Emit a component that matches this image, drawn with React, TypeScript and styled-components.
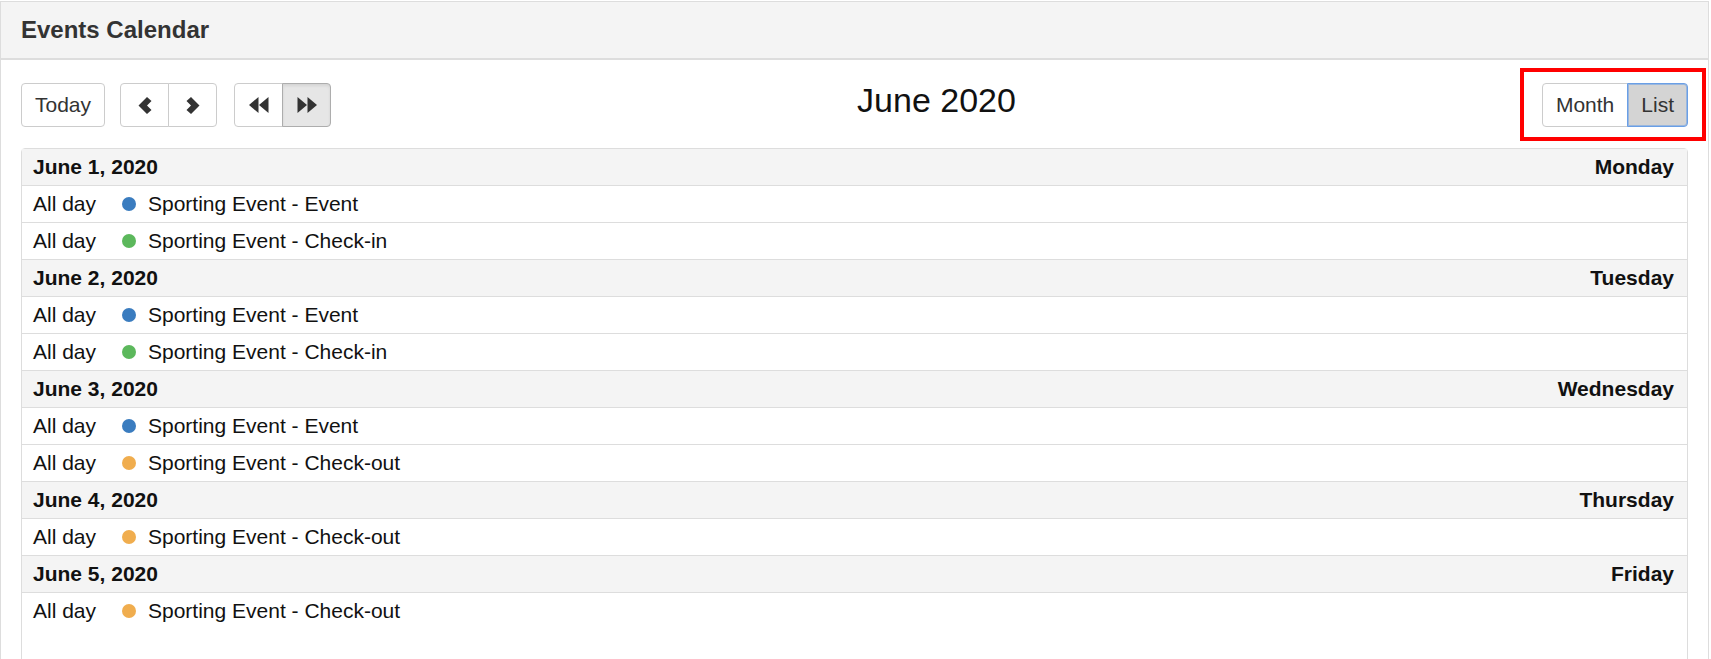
import styled, { createGlobalStyle } from 'styled-components'

type CalEvent = { title: string; kind: 'event' | 'checkin' | 'checkout' }
type Day = { date: string; weekday: string; events: CalEvent[] }

const days: Day[] = [
  {
    date: 'June 1, 2020',
    weekday: 'Monday',
    events: [
      { title: 'Sporting Event - Event', kind: 'event' },
      { title: 'Sporting Event - Check-in', kind: 'checkin' },
    ],
  },
  {
    date: 'June 2, 2020',
    weekday: 'Tuesday',
    events: [
      { title: 'Sporting Event - Event', kind: 'event' },
      { title: 'Sporting Event - Check-in', kind: 'checkin' },
    ],
  },
  {
    date: 'June 3, 2020',
    weekday: 'Wednesday',
    events: [
      { title: 'Sporting Event - Event', kind: 'event' },
      { title: 'Sporting Event - Check-out', kind: 'checkout' },
    ],
  },
  {
    date: 'June 4, 2020',
    weekday: 'Thursday',
    events: [{ title: 'Sporting Event - Check-out', kind: 'checkout' }],
  },
  {
    date: 'June 5, 2020',
    weekday: 'Friday',
    events: [{ title: 'Sporting Event - Check-out', kind: 'checkout' }],
  },
]

const dotColors = {
  event: '#3a7cbf',
  checkin: '#5cb85c',
  checkout: '#f0ad4e',
}

const ChevronLeft = () => (
  <svg width="14" height="17" viewBox="0 0 14 17">
    <path d="M9 0 L13.5 4 L9 8.5 L13.5 13 L9 17 L0.5 8.5 Z" fill="#333" />
  </svg>
)

const ChevronRight = () => (
  <svg width="14" height="17" viewBox="0 0 14 17">
    <path d="M5 0 L0.5 4 L5 8.5 L0.5 13 L5 17 L13.5 8.5 Z" fill="#333" />
  </svg>
)

const FastBackward = () => (
  <svg width="20" height="16" viewBox="0 0 20 16">
    <polygon points="9.5,0 0,8 9.5,16" fill="#333" />
    <polygon points="19.5,0 10,8 19.5,16" fill="#333" />
  </svg>
)

const FastForward = () => (
  <svg width="20" height="16" viewBox="0 0 20 16">
    <polygon points="0.5,0 10,8 0.5,16" fill="#333" />
    <polygon points="10.5,0 20,8 10.5,16" fill="#333" />
  </svg>
)

export default function App() {
  return (
    <>
      <GlobalStyle />
      <Panel>
        <PanelHeading>Events Calendar</PanelHeading>
        <PanelBody>
          <Toolbar>
            <LeftChunk>
              <Button>Today</Button>
              <ButtonGroup>
                <Button $icon>
                  <ChevronLeft />
                </Button>
                <Button $icon>
                  <ChevronRight />
                </Button>
              </ButtonGroup>
              <ButtonGroup $wide>
                <Button $icon>
                  <FastBackward />
                </Button>
                <Button $icon $pressed>
                  <FastForward />
                </Button>
              </ButtonGroup>
            </LeftChunk>
            <Title>June 2020</Title>
            <ViewSwitch>
              <Button>Month</Button>
              <Button $focused>List</Button>
              <Highlight />
            </ViewSwitch>
          </Toolbar>
          <ListView>
            {days.map((day) => (
              <DayBlock key={day.date}>
                <DayHeading>
                  <span>{day.date}</span>
                  <span>{day.weekday}</span>
                </DayHeading>
                {day.events.map((ev, i) => (
                  <EventRow key={i}>
                    <TimeCell>All day</TimeCell>
                    <Dot $color={dotColors[ev.kind]} />
                    <span>{ev.title}</span>
                  </EventRow>
                ))}
              </DayBlock>
            ))}
          </ListView>
        </PanelBody>
      </Panel>
    </>
  )
}

const GlobalStyle = createGlobalStyle`
  body {
    margin: 0;
    background: #fff;
    font-family: "Liberation Sans", Arial, sans-serif;
    color: #111;
    overflow: hidden;
  }
`

const Panel = styled.div`
  margin: 1px 2px 0 0;
  border: 1px solid #ddd;
  border-bottom: none;
  background: #fff;
`

const PanelHeading = styled.div`
  height: 56px;
  display: flex;
  align-items: center;
  padding: 0 20px;
  background: #f4f4f4;
  border-bottom: 2px solid #ddd;
  color: #333;
  font-size: 24px;
  font-weight: bold;
`

const PanelBody = styled.div`
  padding: 23px 20px 0;
`

const Toolbar = styled.div`
  display: flex;
  align-items: flex-start;
  margin-bottom: 21px;
`

const LeftChunk = styled.div`
  display: flex;
  gap: 15px;
`

const ButtonGroup = styled.div<{ $wide?: boolean }>`
  display: flex;
  margin-left: ${(p) => (p.$wide ? '2px' : '0')};

  & > button:not(:first-child) {
    border-top-left-radius: 0;
    border-bottom-left-radius: 0;
    margin-left: -1px;
  }
  & > button:not(:last-of-type) {
    border-top-right-radius: 0;
    border-bottom-right-radius: 0;
  }
`

const Button = styled.button<{ $icon?: boolean; $pressed?: boolean; $focused?: boolean }>`
  position: relative;
  height: 44px;
  padding: ${(p) => (p.$icon ? '0' : '0 13px')};
  width: ${(p) => (p.$icon ? '49px' : 'auto')};
  display: flex;
  align-items: center;
  justify-content: center;
  font-family: "Liberation Sans", Arial, sans-serif;
  font-size: 21px;
  color: #333;
  background: ${(p) => (p.$focused ? '#d4d4d4' : p.$pressed ? '#e6e6e6' : '#fff')};
  border: 1px solid ${(p) => (p.$focused ? '#6a9fe6' : p.$pressed ? '#adadad' : '#ccc')};
  box-shadow: ${(p) =>
    p.$focused
      ? 'inset 0 0 0 1px rgba(106, 159, 230, 0.55)'
      : p.$pressed
      ? 'inset 0 2px 3px rgba(0, 0, 0, 0.08)'
      : 'none'};
  border-radius: 4px;
  z-index: ${(p) => (p.$focused || p.$pressed ? 1 : 0)};
  cursor: pointer;
`

const Title = styled.h2`
  flex: 1;
  margin: -2px 0 0;
  text-align: center;
  font-size: 34px;
  font-weight: normal;
  color: #111;
`

const ViewSwitch = styled(ButtonGroup)`
  position: relative;
`

const Highlight = styled.div`
  position: absolute;
  left: -22px;
  top: -15px;
  right: -18px;
  bottom: -14px;
  border: 4px solid #f00;
  pointer-events: none;
`

const ListView = styled.div`
  border: 1px solid #ddd;
  border-radius: 4px;
  min-height: 560px;
  font-size: 21px;
`

const DayBlock = styled.div`
  &:last-child > div:last-child {
    border-bottom: none;
  }
`

const DayHeading = styled.div`
  height: 36px;
  display: flex;
  align-items: center;
  justify-content: space-between;
  padding: 0 13px 0 11px;
  background: #f4f4f4;
  border-bottom: 1px solid #ddd;
  font-weight: bold;
  color: #111;
`

const EventRow = styled.div`
  height: 36px;
  display: flex;
  align-items: center;
  padding: 0 11px;
  border-bottom: 1px solid #ddd;
  color: #111;
`

const TimeCell = styled.span`
  width: 89px;
`

const Dot = styled.span<{ $color: string }>`
  width: 14px;
  height: 14px;
  border-radius: 50%;
  margin-right: 12px;
  background: ${(p) => p.$color};
`
